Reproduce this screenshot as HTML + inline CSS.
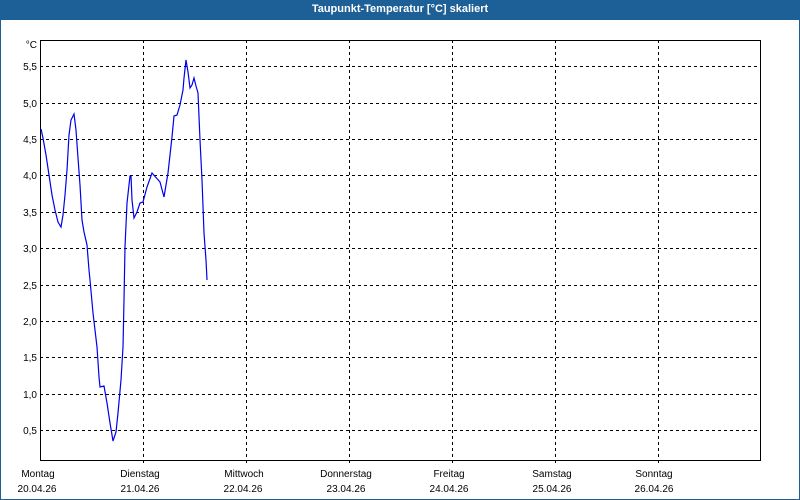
<!DOCTYPE html>
<html><head><meta charset="utf-8"><style>
html,body{margin:0;padding:0;width:800px;height:500px;overflow:hidden;background:#fff;font-family:"Liberation Sans",sans-serif;}
.win{position:absolute;left:0;top:0;width:798px;height:498px;border:1px solid #1d5f97;}
.title{position:absolute;left:0;top:0;width:800px;height:20px;background:#1d5f97;color:#fff;font-weight:bold;font-size:11px;text-align:center;line-height:19px;}
svg text{font-family:"Liberation Sans",sans-serif;font-size:10px;fill:#000;}
</style></head><body>
<div class="win"></div>
<div class="title">Taupunkt-Temperatur [°C] skaliert</div>
<svg width="800" height="500" style="position:absolute;left:0;top:0">
<g stroke="#000" stroke-width="1" stroke-dasharray="3,3" shape-rendering="crispEdges">
<line x1="40" y1="66.5" x2="760" y2="66.5"/><line x1="40" y1="103.5" x2="760" y2="103.5"/><line x1="40" y1="139.5" x2="760" y2="139.5"/><line x1="40" y1="175.5" x2="760" y2="175.5"/><line x1="40" y1="212.5" x2="760" y2="212.5"/><line x1="40" y1="248.5" x2="760" y2="248.5"/><line x1="40" y1="285.5" x2="760" y2="285.5"/><line x1="40" y1="321.5" x2="760" y2="321.5"/><line x1="40" y1="357.5" x2="760" y2="357.5"/><line x1="40" y1="394.5" x2="760" y2="394.5"/><line x1="40" y1="430.5" x2="760" y2="430.5"/>
<line x1="143.5" y1="40" x2="143.5" y2="466"/><line x1="246.5" y1="40" x2="246.5" y2="466"/><line x1="349.5" y1="40" x2="349.5" y2="466"/><line x1="452.5" y1="40" x2="452.5" y2="466"/><line x1="555.5" y1="40" x2="555.5" y2="466"/><line x1="658.5" y1="40" x2="658.5" y2="466"/>
</g>
<rect x="40.5" y="40.5" width="720" height="420" fill="none" stroke="#000" stroke-width="1" shape-rendering="crispEdges"/>
<polyline fill="none" stroke="#0000ee" stroke-width="1.2" points="41,129 43,138 46,155 49,175 52,195 55,210 58,222 61,227 63,215 65,195 67,170 69,135 71,120 74,114 76,130 78,158 80,185 82,220 84,232 87,245 89,270 90,280 93,313 97,347 99,377 100,387 104,386 107,403 110,423 113,441 116,432 118,413 121,380 123,347 124,300 125,247 127,203 130,176 131,176 132,200 134,218 137,212 140,203 143,202 147,187 152,173 160,182 164,197 168,173 172,137 174,116 177,115 180,105 183,90 184,78 186,60 188,72 190,88 192,85 194,78 196,86 198,93 200,140 202,180 204,233 206,260 207,280"/>
<g text-anchor="end">
<text x="37" y="48">°C</text>
<text x="37" y="70">5,5</text><text x="37" y="107">5,0</text><text x="37" y="143">4,5</text><text x="37" y="179">4,0</text><text x="37" y="216">3,5</text><text x="37" y="252">3,0</text><text x="37" y="289">2,5</text><text x="37" y="325">2,0</text><text x="37" y="361">1,5</text><text x="37" y="398">1,0</text><text x="37" y="434">0,5</text>
</g>
<g text-anchor="middle">
<text x="38" y="477">Montag</text><text x="37" y="492">20.04.26</text>
<text x="140" y="477">Dienstag</text><text x="140" y="492">21.04.26</text>
<text x="244" y="477">Mittwoch</text><text x="243" y="492">22.04.26</text>
<text x="346" y="477">Donnerstag</text><text x="346" y="492">23.04.26</text>
<text x="449" y="477">Freitag</text><text x="449" y="492">24.04.26</text>
<text x="552" y="477">Samstag</text><text x="552" y="492">25.04.26</text>
<text x="654" y="477">Sonntag</text><text x="654" y="492">26.04.26</text>
</g>
</svg>
</body></html>
